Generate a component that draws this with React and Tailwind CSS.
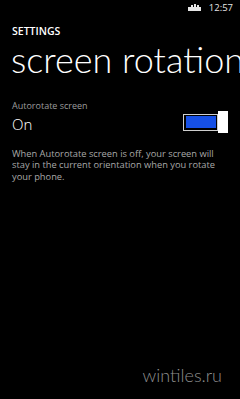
// Windows Phone: Settings > screen rotation
function StatusIcon() {
  return (
    <svg width="15" height="8" viewBox="0 0 15 8" className="block">
      <path
        d="M1 3h3V1h2v2h1V0h2v3h1V1h2v2h2v4H1z"
        fill="#e6e6e6"
      />
    </svg>
  );
}

function Toggle() {
  return (
    <div className="flex items-center">
      <div className="w-[35px] h-[17px] border-[1.5px] border-[#cfcfcf] p-[1.5px] box-border">
        <div className="w-full h-full bg-[#1650e6]" />
      </div>
      <div className="w-[10px] h-[22px] bg-white" />
    </div>
  );
}

const body = { fontFamily: "'Open Sans', 'Noto Sans', sans-serif" };

export default function App() {
  return (
    <div
      className="w-[240px] h-[399px] bg-black text-white overflow-hidden flex flex-col"
      style={{ fontFamily: "Lato, 'Open Sans', sans-serif" }}
    >
      {/* status bar */}
      <div className="h-[16px] flex items-center justify-end pr-[7px] gap-[7px]">
        <StatusIcon />
        <span className="text-[9.5px] leading-none text-[#e6e6e6]" style={body}>
          12:57
        </span>
      </div>

      <div
        className="pl-[12px] mt-[9px] text-[10.5px] leading-[13px] font-semibold"
        style={body}
      >
        SETTINGS
      </div>
      <div className="pl-[11px] mt-[3px] text-[36px] leading-[36px] font-light whitespace-nowrap">
        screen rotation
      </div>

      <div className="pl-[12px] mt-[23px] text-[9px] leading-[11px] text-[#9c9c9c]" style={body}>
        Autorotate screen
      </div>
      <div className="pl-[12px] pr-[12px] flex items-center justify-between">
        <span className="text-[15px] leading-[18px] font-light" style={body}>
          On
        </span>
        <div className="mb-[3px]">
          <Toggle />
        </div>
      </div>

      <p
        className="pl-[12px] pr-[12px] mt-[12px] text-[9.3px] leading-[11.3px] text-[#a8a8a8]"
        style={body}
      >
        When Autorotate screen is off, your screen will stay in the current
        orientation when you rotate your phone.
      </p>

      <div className="mt-auto mb-[14px] pr-[18px] text-right text-[18px] leading-[20px] font-light text-[#8e8e8e]">
        wintiles.ru
      </div>
    </div>
  );
}
